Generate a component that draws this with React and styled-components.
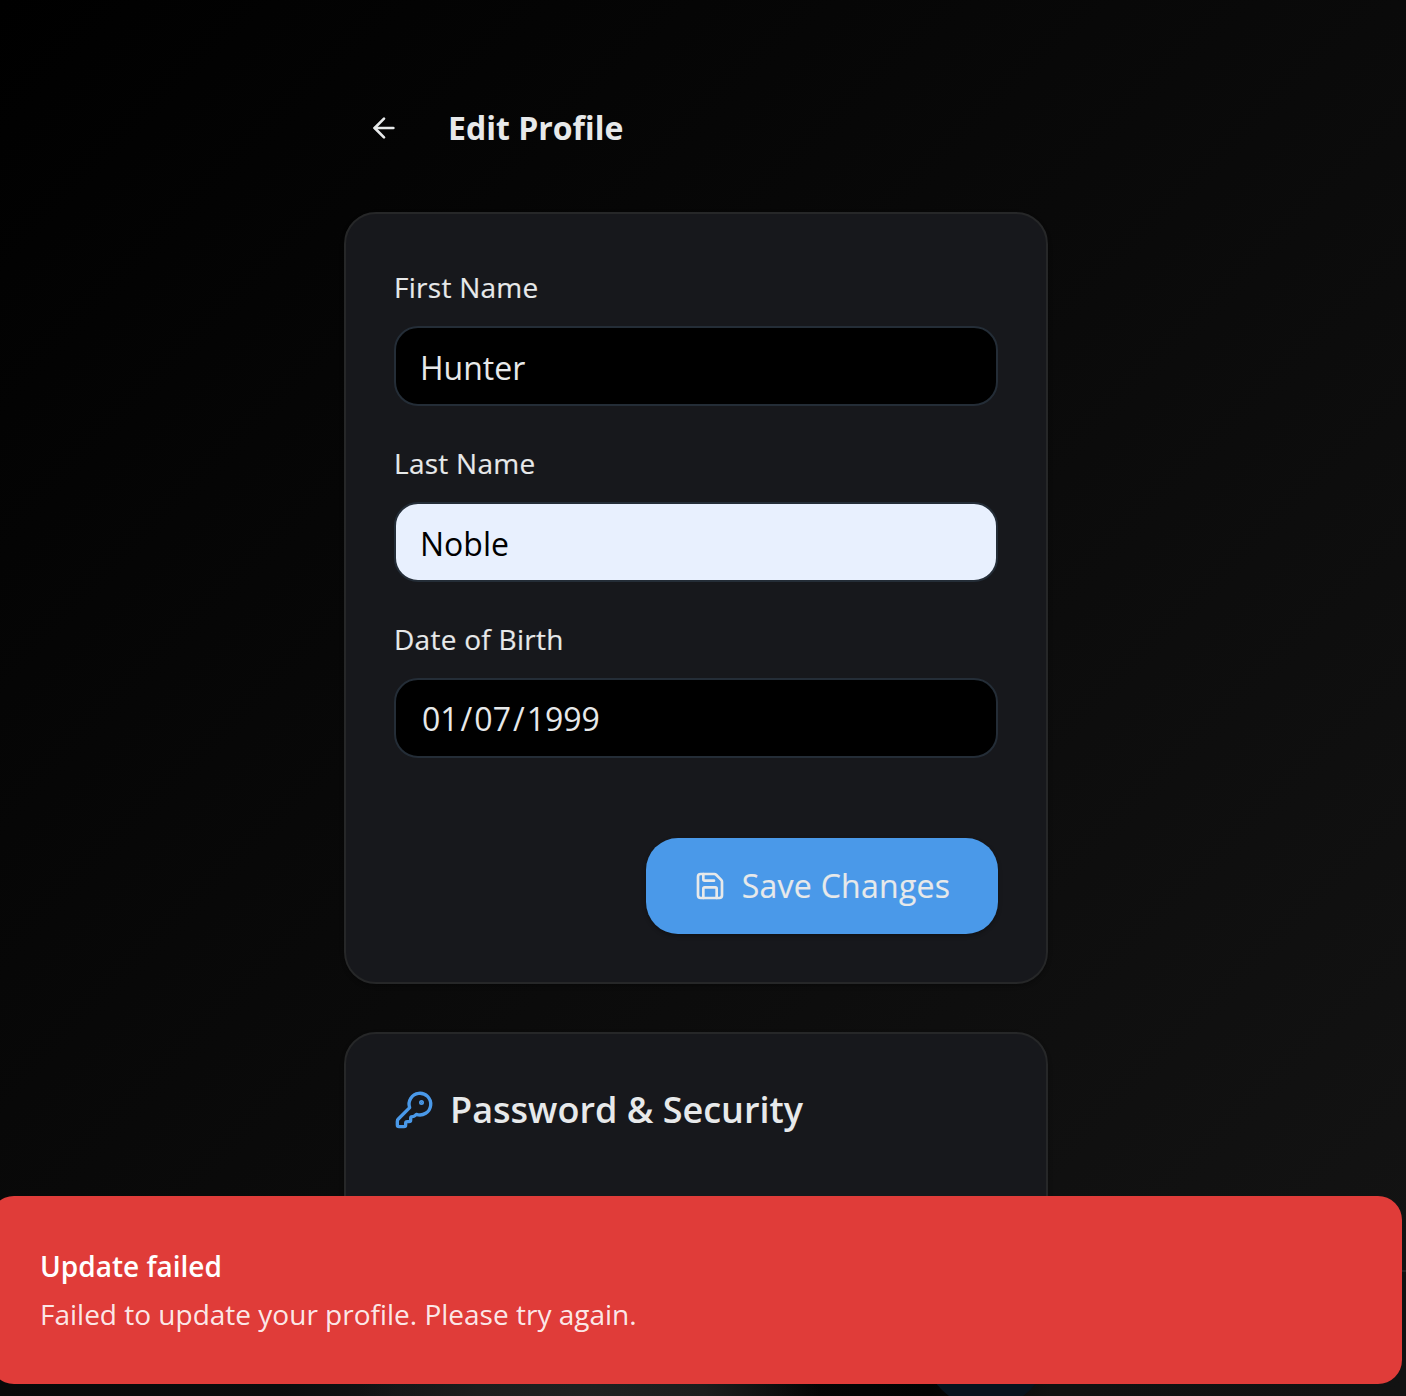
import React from "react";
import styled, { createGlobalStyle, css } from "styled-components";
import { ArrowLeft, KeyRound, Save } from "lucide-react";

const GlobalStyle = createGlobalStyle`
  *, *::before, *::after { box-sizing: border-box; }
  body {
    margin: 0;
    overflow: hidden;
    background: #000;
    color: #e7e9ea;
    font-family: "Open Sans", "Noto Sans", sans-serif;
  }
`;

const mediumWeight = css`
  font-weight: 400;
  letter-spacing: 0.27px;
  -webkit-text-stroke: 0.15px currentColor;
`;

const Page = styled.div`
  position: relative;
  height: 1396px;
  overflow: hidden;
  background: linear-gradient(135deg, #000 0%, #141414 100%);
`;

const Column = styled.main`
  width: 704px;
  margin-left: 344px;
  padding-top: 88px;
  display: flex;
  flex-direction: column;
  gap: 48px;
`;

const Header = styled.header`
  display: flex;
  align-items: center;
  gap: 24px;
  height: 80px;
  margin-bottom: -4px;
`;

const BackButton = styled.button`
  width: 80px;
  height: 80px;
  padding: 0;
  border: 0;
  background: none;
  color: #e7e9ea;
  display: flex;
  align-items: center;
  justify-content: center;
`;

const Title = styled.h1`
  margin: 0;
  font-size: 32px;
  line-height: 48px;
  font-weight: 700;
`;

const Card = styled.section`
  border: 2px solid #262728;
  border-radius: 32px;
  background: #17181c;
  padding: 48px;
  height: ${(p) => p.$height}px;
  box-shadow: 0 2px 4px rgba(0, 0, 0, 0.3);
`;

const Form = styled.form`
  display: flex;
  flex-direction: column;
  gap: 32px;
`;

const Field = styled.div`
  display: flex;
  flex-direction: column;
  gap: 16px;
`;

const Label = styled.label`
  padding-top: 5px;
  font-size: 28px;
  line-height: 40px;
  height: 48px;
  ${mediumWeight}
`;

const Input = styled.input`
  width: 100%;
  height: 80px;
  border: 2px solid #242d37;
  border-radius: 24px;
  padding: 3px 24px 1px;
  outline: 0;
  font: 400 32px/40px "Open Sans", "Noto Sans", sans-serif;
  color: ${(p) => (p.$autofilled ? "#000" : "#e7e9ea")};
  background: ${(p) => (p.$autofilled ? "#e8f0fe" : "#000")};

  &::-webkit-calendar-picker-indicator { display: none; }
  &::-webkit-datetime-edit { padding: 0; }
  &::-webkit-datetime-edit-month-field,
  &::-webkit-datetime-edit-day-field,
  &::-webkit-datetime-edit-year-field { padding: 0 2px; }
`;

const Actions = styled.div`
  display: flex;
  justify-content: flex-end;
  padding-top: 48px;
`;

const SaveButton = styled.button`
  width: 352px;
  height: 96px;
  padding: 0;
  border: 0;
  border-radius: 32px;
  display: flex;
  align-items: center;
  justify-content: center;
  gap: 16px;
  background: #4a99e9;
  color: #e7e9ea;
  font: 400 32px/48px "Open Sans", "Noto Sans", sans-serif;
  ${mediumWeight}
  box-shadow: 0 2px 4px rgba(0, 0, 0, 0.3);
`;

const SectionHeading = styled.h2`
  margin: 0;
  display: flex;
  align-items: center;
  gap: 16px;
  font-size: 36px;
  line-height: 56px;
  font-weight: 600;

  svg { color: #4a99e9; }
`;

const BottomBar = styled.nav`
  position: absolute;
  left: 0;
  right: 0;
  bottom: 0;
  height: 126px;
  border-top: 2px solid #262626;
  background:
    radial-gradient(ellipse 230px 100px at 590px 126px, #202121 0%, #1c1d1d 50%, transparent 100%),
    linear-gradient(90deg, #090909 0, #0b0c0d 280px, #131416 400px, #050505 800px, #030303 930px, #111 1050px, #121212 100%);
`;

const BarAction = styled.div`
  position: absolute;
  left: 923px;
  bottom: -12px;
  width: 126px;
  height: 126px;
  border-radius: 50%;
  background: #07131e;
`;

const Toast = styled.div`
  position: absolute;
  left: -10px;
  top: 1196px;
  width: 1412px;
  height: 188px;
  border-radius: 24px;
  background: #e03c39;
  padding: 50px;
  display: flex;
  flex-direction: column;
  gap: 8px;
`;

const ToastTitle = styled.div`
  color: #fff;
  font-size: 28px;
  line-height: 40px;
  font-weight: 600;
`;

const ToastText = styled.div`
  color: rgba(255, 255, 255, 0.9);
  font-size: 28px;
  line-height: 40px;
`;

const FIELDS = [
  { id: "first", label: "First Name", value: "Hunter" },
  { id: "last", label: "Last Name", value: "Noble", autofilled: true },
  { id: "dob", label: "Date of Birth", value: "1999-01-07", type: "date" },
];

export default function App() {
  return (
    <Page>
      <GlobalStyle />
      <Column>
        <Header>
          <BackButton aria-label="Back">
            <ArrowLeft size={32} />
          </BackButton>
          <Title>Edit Profile</Title>
        </Header>
        <Card $height={772}>
          <Form>
            {FIELDS.map((f) => (
              <Field key={f.id}>
                <Label htmlFor={f.id}>{f.label}</Label>
                <Input id={f.id} type={f.type || "text"} defaultValue={f.value} $autofilled={f.autofilled} />
              </Field>
            ))}
            <Actions>
              <SaveButton type="button">
                <Save size={32} />
                Save Changes
              </SaveButton>
            </Actions>
          </Form>
        </Card>
        <Card $height={330}>
          <SectionHeading>
            <KeyRound size={40} />
            Password &amp; Security
          </SectionHeading>
        </Card>
      </Column>
      <BottomBar>
        <BarAction />
      </BottomBar>
      <Toast role="alert">
        <ToastTitle>Update failed</ToastTitle>
        <ToastText>Failed to update your profile. Please try again.</ToastText>
      </Toast>
    </Page>
  );
}
